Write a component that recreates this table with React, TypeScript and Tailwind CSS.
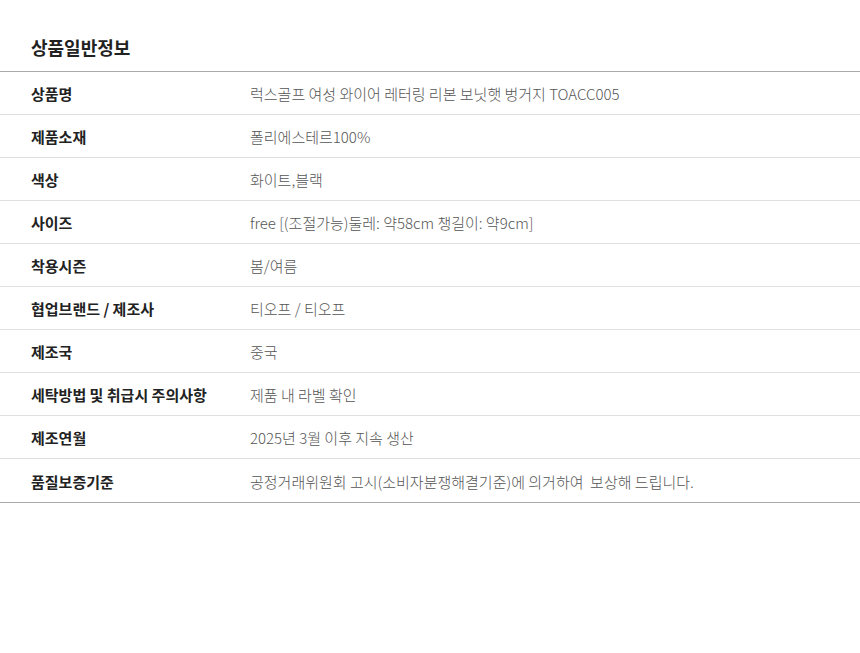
const rows: [string, string][] = [
  ["상품명", "럭스골프 여성 와이어 레터링 리본 보닛햇 벙거지 TOACC005"],
  ["제품소재", "폴리에스테르100%"],
  ["색상", "화이트,블랙"],
  ["사이즈", "free [(조절가능)둘레: 약58cm 챙길이: 약9cm]"],
  ["착용시즌", "봄/여름"],
  ["협업브랜드 / 제조사", "티오프 / 티오프"],
  ["제조국", "중국"],
  ["세탁방법 및 취급시 주의사항", "제품 내 라벨 확인"],
  ["제조연월", "2025년 3월 이후 지속 생산"],
  ["품질보증기준", "공정거래위원회 고시(소비자분쟁해결기준)에 의거하여  보상해 드립니다."],
];

export default function App() {
  return (
    <div
      className="w-[860px] min-h-[653px] bg-white"
      style={{ fontFamily: '"Noto Sans CJK KR", "Noto Sans", sans-serif' }}
    >
      <h2 className="px-[31px] pt-[34px] pb-[10px] text-[18px] leading-[27px] font-bold text-[#222]">
        상품일반정보
      </h2>
      <div className="border-t border-b border-[#aaaaaa]">
        {rows.map(([label, value], i) => (
          <div
            key={label}
            className={
              "flex h-[43px] items-center pt-[3px] text-[15px] " +
              (i < rows.length - 1 ? "border-b border-[#e0e0e0]" : "")
            }
          >
            <div className="w-[250px] shrink-0 pl-[31px] font-bold text-[#222]">
              {label}
            </div>
            <div className="font-light text-[#555] whitespace-pre">{value}</div>
          </div>
        ))}
      </div>
    </div>
  );
}
